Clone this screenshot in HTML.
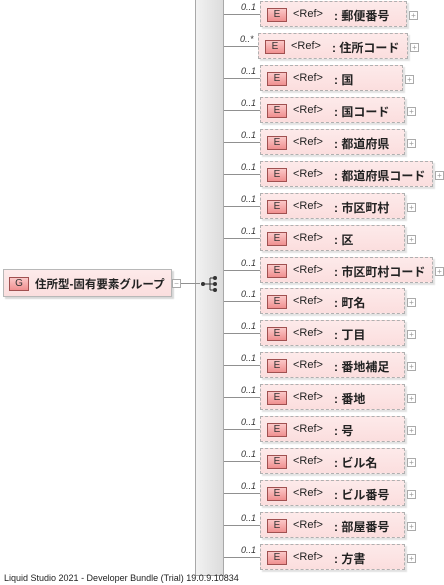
<!DOCTYPE html>
<html><head><meta charset="utf-8"><style>
body{margin:0;width:444px;height:585px;background:#fff;position:relative;overflow:hidden;font-family:"Liberation Sans","Noto Sans CJK JP",sans-serif}
.bar{position:absolute;left:195px;top:0;width:29px;height:576px;background:linear-gradient(90deg,#f2f2f2,#dcdcdc);border:1px solid #a8a8a8;border-top:none;box-sizing:border-box}
.ln{position:absolute;height:1px;background:#909090}
.box{position:absolute;height:26px;background:linear-gradient(#fdeaea,#fbdede);border:1px dashed #b0b0b0;box-sizing:border-box;box-shadow:2px 2px 1px #e2e2e2}
.E{position:absolute;left:6px;top:6px;width:20px;height:14px;border:1px solid #a05050;box-sizing:border-box;background:linear-gradient(#fbc8c8,#f09090);font-size:10px;text-align:center;line-height:12px;color:#333}
.ref{position:absolute;left:32px;top:6px;font-size:11px;color:#222}
.nm{position:absolute;left:73px;top:5px;font-size:12px;font-weight:bold;color:#222;white-space:nowrap}
.pl{position:absolute;width:7px;height:7px;border:1px solid #aaa;background:#fff;font-size:8px;line-height:7px;text-align:center;color:#999}
.oc{position:absolute;font-size:9px;font-style:italic;color:#333}
</style></head><body>
<div class="bar"></div>
<div class="ln" style="left:180px;top:283px;width:20px"></div>
<div style="position:absolute;left:3px;top:269px;width:169px;height:28px;background:linear-gradient(#fdeaea,#fbdede);border:1px solid #b8b8b8;box-sizing:border-box;box-shadow:2px 2px 1px #d8d8d8">
<div class="E" style="left:5px;top:7px;width:20px">G</div>
<div style="position:absolute;left:31px;top:6px;font-size:11.5px;font-weight:bold;color:#222">住所型-固有要素グループ</div></div>
<div class="pl" style="left:172px;top:279px">−</div>
<svg style="position:absolute;left:200px;top:274px" width="20" height="20"><line x1="3" y1="10" x2="10" y2="10" stroke="#333"/><line x1="10" y1="4" x2="10" y2="16" stroke="#333"/><line x1="10" y1="4" x2="15" y2="4" stroke="#333"/><line x1="10" y1="16" x2="15" y2="16" stroke="#333"/><line x1="10" y1="10" x2="15" y2="10" stroke="#333"/><circle cx="3" cy="10" r="2" fill="#333"/><circle cx="15" cy="4" r="2" fill="#333"/><circle cx="15" cy="10" r="2" fill="#333"/><circle cx="15" cy="16" r="2" fill="#333"/></svg>
<div id="rows"></div>
<div style="position:absolute;left:4px;top:573px;font-size:9px;color:#222">Liquid Studio 2021 - Developer Bundle (Trial) 19.0.9.10834</div>
<script>
var d=[["郵便番号",147],["住所コード",150,1],["国",143],["国コード",145],["都道府県",145],["都道府県コード",173],["市区町村",145],["区",145],["市区町村コード",173],["町名",145],["丁目",145],["番地補足",145],["番地",145],["号",145],["ビル名",145],["ビル番号",145],["部屋番号",145],["方書",145]];
var h="";
d.forEach(function(r,i){var t=Math.round(1+i*31.94);var l=r[2]?258:260;var c=t+13;
h+='<div class="ln" style="left:224px;top:'+c+'px;width:'+(l-224)+'px"></div>';
h+='<div class="oc" style="left:'+(r[2]?240:241)+'px;top:'+(t+1)+'px">'+(r[2]?'0..*':'0..1')+'</div>';
h+='<div class="box" style="left:'+l+'px;top:'+t+'px;width:'+r[1]+'px"><div class="E">E</div><div class="ref">&lt;Ref&gt;</div><div class="nm">: '+r[0]+'</div></div>';
h+='<div class="pl" style="left:'+(l+r[1]+2)+'px;top:'+(t+10)+'px">+</div>';});
document.getElementById("rows").innerHTML=h;
</script>
</body></html>
